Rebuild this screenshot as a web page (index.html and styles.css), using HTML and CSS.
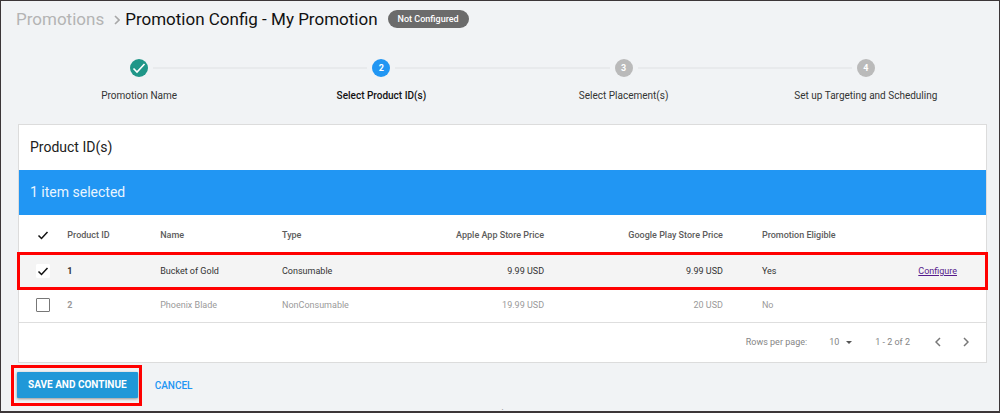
FILE: index.html
```html
<!DOCTYPE html>
<html lang="en">
<head>
<meta charset="utf-8">
<title>Promotion Config - My Promotion</title>
<link rel="stylesheet" href="styles.css">
</head>
<body>
<main class="page">
  <header class="page-header">
    <nav class="breadcrumb" aria-label="Breadcrumb"><a href="#promotions">Promotions</a></nav>
    <svg class="crumb-arrow" viewBox="0 0 6 10" aria-hidden="true"><path d="M1 1l4 4-4 4"/></svg>
    <h1>Promotion Config - My Promotion</h1>
    <span class="badge">Not Configured</span>
  </header>

  <ol class="stepper">
    <li class="step done">
      <span class="dot"><svg viewBox="0 0 18 18" aria-hidden="true"><path d="M3.5 9.5l3.5 3.5 7.5-8"/></svg></span>
      <span class="step-label">Promotion Name</span>
    </li>
    <li class="step current" aria-current="step"><span class="dot">2</span><span class="step-label">Select Product ID(s)</span></li>
    <li class="step"><span class="dot">3</span><span class="step-label">Select Placement(s)</span></li>
    <li class="step"><span class="dot">4</span><span class="step-label">Set up Targeting and Scheduling</span></li>
  </ol>

  <section class="card">
    <h2 class="card-title">Product ID(s)</h2>
    <p class="selection">1 item selected</p>
    <table class="products">
      <colgroup>
        <col class="col-check"><col class="col-id"><col class="col-name"><col class="col-type"><col class="col-apple"><col class="col-google"><col class="col-eligible"><col class="col-action">
      </colgroup>
      <thead>
        <tr>
          <th><span class="check"><input type="checkbox" checked aria-label="Select all products"><svg viewBox="0 0 14 14" aria-hidden="true"><path d="M2.5 7.5l3 3 6-6.5"/></svg></span></th>
          <th>Product ID</th><th>Name</th><th>Type</th>
          <th class="num">Apple App Store Price</th><th class="num">Google Play Store Price</th>
          <th class="eligible">Promotion Eligible</th><th></th>
        </tr>
      </thead>
      <tbody>
        <tr class="selected">
          <td><span class="check"><input type="checkbox" checked aria-label="Select product 1"><svg viewBox="0 0 14 14" aria-hidden="true"><path d="M2.5 7.5l3 3 6-6.5"/></svg></span></td>
          <td class="id">1</td><td>Bucket of Gold</td><td>Consumable</td>
          <td class="num">9.99 USD</td><td class="num">9.99 USD</td>
          <td class="eligible">Yes</td><td class="action"><a href="#configure">Configure</a></td>
        </tr>
        <tr class="ineligible">
          <td><span class="check"><input type="checkbox" aria-label="Select product 2"></span></td>
          <td class="id">2</td><td>Phoenix Blade</td><td>NonConsumable</td>
          <td class="num">19.99 USD</td><td class="num">20 USD</td>
          <td class="eligible">No</td><td></td>
        </tr>
      </tbody>
    </table>
    <div class="pagination">
      <label for="rows">Rows per page:</label>
      <span class="rows">
        <select id="rows"><option>10</option></select>
        <svg viewBox="0 0 6 3" aria-hidden="true"><path d="M0 0h6L3 3z"/></svg>
      </span>
      <span class="range">1 - 2 of 2</span>
      <button type="button" class="pager" aria-label="Previous page"><svg viewBox="0 0 6 10"><path d="M5 1L1 5l4 4"/></svg></button>
      <button type="button" class="pager" aria-label="Next page"><svg viewBox="0 0 6 10"><path d="M1 1l4 4-4 4"/></svg></button>
    </div>
  </section>

  <div class="actions">
    <div class="highlight"><button type="button" class="save">SAVE AND CONTINUE</button></div>
    <button type="button" class="cancel">CANCEL</button>
  </div>
  <footer class="footer">.</footer>
</main>
</body>
</html>
```
FILE: styles.css
```css
* { box-sizing: border-box; }

body {
  margin: 0;
  font-family: Roboto, "Liberation Sans", sans-serif;
  font-size: 10px;
  color: #212121;
  background: #f1f3f5;
}

h1, h2, p, ol { margin: 0; padding: 0; font-weight: 400; }
button, select { font: inherit; border: 0; background: none; padding: 0; cursor: pointer; }

.page {
  min-height: 100vh;
  padding: 8px 12px 0 17px;
  border: 1px solid #3c3638;
  border-bottom-width: 2px;
}

.page-header { display: flex; align-items: center; height: 20px; margin-left: -2px; }
.breadcrumb a { color: #b4b4b4; text-decoration: none; font-size: 17px; }
.crumb-arrow { width: 6px; height: 10px; margin: 2px 5px 0 10px; fill: none; stroke: #a8a8a8; stroke-width: 1.6; }
h1 { font-size: 17px; color: #111; }
.badge {
  margin-left: 10px;
  padding: 0 10px;
  border-radius: 9px;
  background: #6b6b6b;
  color: #fff;
  font-size: 9px;
  font-weight: 500;
  line-height: 18px;
}

.stepper { display: flex; list-style: none; margin-top: 30px; }
.step { position: relative; flex: 1; display: flex; flex-direction: column; align-items: center; gap: 12px; }
.step .dot {
  display: flex;
  align-items: center;
  justify-content: center;
  width: 18px;
  height: 18px;
  border-radius: 50%;
  background: #bababa;
  color: #fff;
  font-size: 9px;
  font-weight: 700;
}
.step + .step::before {
  content: "";
  position: absolute;
  top: 8px;
  left: calc(-50% + 14px);
  width: calc(100% - 28px);
  height: 2px;
  background: #e8eaec;
}
.done .dot { background: #1f9688; }
.done svg { width: 18px; height: 18px; fill: none; stroke: #fff; stroke-width: 1.6; }
.current .dot { background: #2196f3; }
.step-label { font-size: 10px; line-height: 14px; color: #333; }
.current .step-label { color: #111; font-weight: 500; }

.card { margin-top: 21px; border: 1px solid #dcdcdc; background: #fff; }
.card-title, .selection { padding: 0 11px; font-size: 14px; line-height: 45px; }
.selection { background: #2196f3; color: #e9f5ff; }

.products { width: 100%; table-layout: fixed; border-collapse: collapse; font-size: 9px; }
.col-check { width: 5%; }
.col-id { width: 9.6%; }
.col-name { width: 12.6%; }
.col-type { width: 12.1%; }
.col-apple { width: 15%; }
.col-google { width: 18.5%; }
.col-eligible { width: 15%; }
.products th, .products td { padding: 0; text-align: left; }
.products th { height: 39px; font-weight: 500; color: #5c5c5c; }
.products td { height: 34px; color: #333; }
.products .num { text-align: right; }
.products .eligible { padding-left: 39px; }
.products .action { padding-right: 29px; text-align: right; }
.products .id { font-weight: 700; }
.action a { color: #551a8b; }
.selected { background: #f4f4f4; outline: 3px solid #f00; outline-offset: -1px; }
.ineligible { border-bottom: 1px solid #dedede; }
.products .ineligible td { color: #9a9a9a; }

.check { display: grid; width: 14px; height: 14px; margin-left: 17px; }
.check input, .check svg { grid-area: 1 / 1; width: 14px; height: 14px; margin: 0; }
.check input { appearance: none; border: 1px solid #777; border-radius: 1px; background: #fff; }
.check input:checked { border-color: #fff; }
.check svg { fill: none; stroke: #111; stroke-width: 1.5; pointer-events: none; }

.pagination { display: flex; align-items: center; justify-content: flex-end; height: 39px; padding-right: 17px; color: #858585; font-size: 9px; }
.rows { display: flex; align-items: center; gap: 6px; margin: 0 23px 0 22px; }
.rows select { appearance: none; color: inherit; }
.rows svg { width: 6px; height: 3px; fill: #555; }
.range { margin-right: 25px; }
.pager { display: flex; }
.pager + .pager { margin-left: 22px; }
.pager svg { width: 6px; height: 10px; fill: none; stroke: #777; stroke-width: 1.5; }

.actions { display: flex; align-items: center; gap: 13px; margin: 2px 0 0 -7px; }
.highlight { padding: 4px 1px 5px 3px; border: 3px solid #f00; }
.save {
  padding: 0 11px;
  border-radius: 1px;
  background: #2098d8;
  color: #fff;
  font-weight: 700;
  line-height: 26px;
  box-shadow: 0 1px 3px #0006;
}
.cancel { color: #2196f3; font-weight: 500; }
.footer { font-size: 8px; line-height: 3px; text-align: center; color: #777; }
```
